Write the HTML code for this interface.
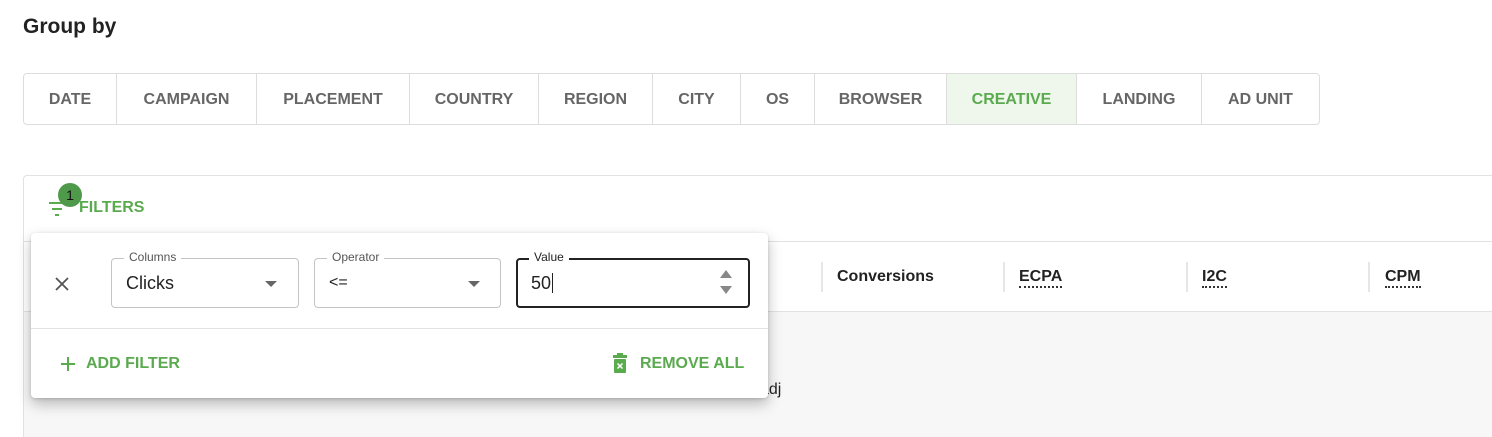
<!DOCTYPE html>
<html><head><style>
*{box-sizing:border-box;margin:0;padding:0}
html,body{width:1492px;height:437px;overflow:hidden}
body{background:#fff;font-family:"Liberation Sans",sans-serif;position:relative;color:#222}
.abs{position:absolute}
h1{position:absolute;left:23px;top:15px;font-size:21px;font-weight:bold;color:#222}
.grp{position:absolute;top:73px;left:23px;height:52px;display:flex;border:1px solid #ddd;border-radius:4px;overflow:hidden}
.grp div{height:50px;line-height:52px;text-align:center;font-size:16px;color:#666;border-right:1px solid #ddd;font-weight:bold}
.grp div:last-child{border-right:none}
.grp .on{background:#eff7ec;color:#5aaa4e}
.card{position:absolute;left:23px;top:175px;width:1469px;height:262px;border:1px solid #e2e2e2;border-right:none;border-bottom:none;border-radius:4px 0 0 0}
.g{color:#5aaa4e;font-weight:bold}
.th{position:absolute;top:268px;font-size:16px;font-weight:bold;color:#222}
.dot{border-bottom:2px dotted #333;padding-bottom:1px}
.div{position:absolute;top:262px;width:2px;height:30px;background:#e6e6e6}
.pop{position:absolute;left:31px;top:233px;width:737px;height:165px;background:#fff;border-radius:4px;box-shadow:0 6px 14px rgba(0,0,0,.25),0 1px 3px rgba(0,0,0,.15)}
.fld{position:absolute;top:25px;height:50px;border:1px solid #c4c4c4;border-radius:4px}
.lbl{position:absolute;top:-9px;left:12px;background:#fff;padding:0 5px;font-size:12px;color:#555}
.arr{position:absolute;top:22px;width:0;height:0;border-left:6px solid transparent;border-right:6px solid transparent;border-top:6px solid #666}
</style></head><body>
<h1>Group by</h1>
<div class="grp">
<div style="width:93px">DATE</div><div style="width:140px">CAMPAIGN</div><div style="width:153px">PLACEMENT</div><div style="width:129px">COUNTRY</div><div style="width:114px">REGION</div><div style="width:88px">CITY</div><div style="width:74px">OS</div><div style="width:132px">BROWSER</div><div class="on" style="width:130px">CREATIVE</div><div style="width:125px">LANDING</div><div style="width:117px">AD UNIT</div>
</div>
<div class="card"></div>
<div class="abs" style="left:24px;top:241px;width:1468px;height:1px;background:#e2e2e2"></div>
<div class="abs" style="left:24px;top:311px;width:1468px;height:126px;background:#f7f7f7;border-top:1px solid #e2e2e2"></div>
<svg class="abs" style="left:48px;top:200px" width="20" height="18"><path d="M1 3h16M4 9h10M7 15h4" stroke="#5aaa4e" stroke-width="2"/></svg>
<div class="abs" style="left:58px;top:183px;width:24px;height:24px;border-radius:12px;background:#4f9a4a;color:#111;font-size:14px;text-align:center;line-height:24px">1</div>
<div class="abs g" style="left:79px;top:199px;font-size:16px">FILTERS</div>
<div class="div" style="left:821px"></div><div class="th" style="left:837px">Conversions</div>
<div class="div" style="left:1003px"></div><div class="th" style="left:1019px"><span class="dot">ECPA</span></div>
<div class="div" style="left:1186px"></div><div class="th" style="left:1202px"><span class="dot">I2C</span></div>
<div class="div" style="left:1368px"></div><div class="th" style="left:1385px"><span class="dot">CPM</span></div>
<div class="abs" style="left:760px;top:381px;font-size:16px">adj</div>
<div class="pop">
<svg class="abs" style="left:23px;top:43px" width="16" height="16"><path d="M2 2l12 12M14 2L2 14" stroke="#555" stroke-width="1.8"/></svg>
<div class="fld" style="left:80px;width:188px"><span class="lbl">Columns</span><div class="abs" style="left:14px;top:14px;font-size:18px;color:#222">Clicks</div><div class="arr" style="left:153px"></div></div>
<div class="fld" style="left:283px;width:187px"><span class="lbl">Operator</span><div class="abs" style="left:14px;top:15px;font-size:16px;color:#222">&lt;=</div><div class="arr" style="left:153px"></div></div>
<div class="fld" style="left:485px;width:234px;border:2px solid #222"><span class="lbl" style="top:-10px;left:11px;color:#222">Value</span><div class="abs" style="left:13px;top:13px;font-size:18px;color:#222">50<span style="border-left:1px solid #222;margin-left:1px"></span></div>
<div class="abs" style="left:202px;top:10px;width:0;height:0;border-left:6px solid transparent;border-right:6px solid transparent;border-bottom:8px solid #888"></div>
<div class="abs" style="left:202px;top:26px;width:0;height:0;border-left:6px solid transparent;border-right:6px solid transparent;border-top:8px solid #888"></div></div>
<div class="abs" style="left:0;top:95px;width:737px;height:1px;background:#e2e2e2"></div>
<svg class="abs" style="left:29px;top:123px" width="16" height="16"><path d="M8 1v14M1 8h14" stroke="#5aaa4e" stroke-width="2"/></svg>
<div class="abs g" style="left:55px;top:122px;font-size:16px">ADD FILTER</div>
<svg class="abs" style="left:582px;top:120px" width="14" height="20"><rect x="0" y="2" width="14" height="3" fill="#5aaa4e"/><rect x="4" y="0" width="6" height="3" fill="#5aaa4e"/><rect x="1" y="6" width="12" height="14" rx="1" fill="#5aaa4e"/><path d="M4.5 10.5l5 5M9.5 10.5l-5 5" stroke="#fff" stroke-width="1.5"/></svg>
<div class="abs g" style="left:609px;top:122px;font-size:16px">REMOVE ALL</div>
</div>
</body></html>
